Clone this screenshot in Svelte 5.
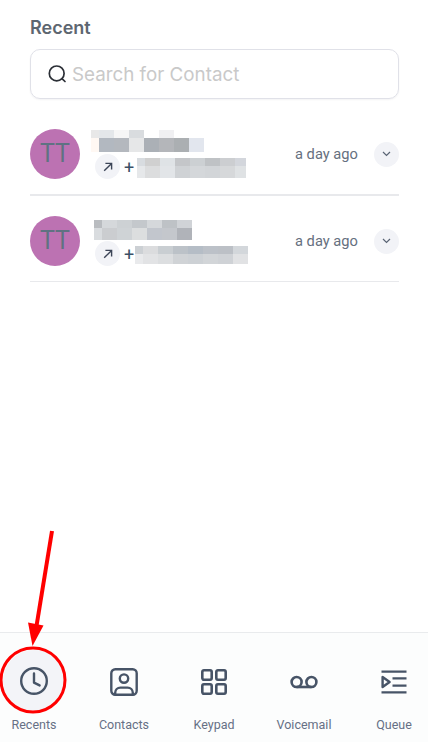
<script>
  // blurred-out name and number blocks, each cell is [width, colour]
  const calls = [
    {
      nameLeft: 0,
      nameTop: 1,
      numberTop: 2,
      digitsLeft: 0,
      nameHeights: [8, 14],
      numberHeights: [8, 12],
      name: [
        [[8, '#e8e8e8'], [15, '#e4e7ea'], [15, '#f6f6f6'], [15, '#d9dcdf'], [15, '#ffffff'], [15, '#f0f0f2']],
        [[8, '#fff8f3'], [15, '#b2b8c0'], [15, '#b4b8be'], [15, '#e6e7e8'], [15, '#abb0b6'], [15, '#b4b6ba'], [15, '#abafb2'], [15, '#e2e6ee']]
      ],
      number: [
        [[8, '#d8dce0'], [15, '#d0d0d0'], [15, '#dfe3e6'], [15, '#c4c6c9'], [15, '#ccd0d3'], [15, '#bfc2c5'], [15, '#ccced1'], [11, '#d3d6dc']],
        [[8, '#e6e8ea'], [15, '#dcddde'], [15, '#e2e5e8'], [15, '#cfd2d5'], [15, '#d4d7da'], [15, '#d2d5d8'], [15, '#d6d8da'], [11, '#dfe2e4']]
      ]
    },
    {
      nameLeft: 3,
      nameTop: 4,
      numberTop: 1,
      digitsLeft: -2,
      nameHeights: [8, 12],
      numberHeights: [8, 10],
      name: [
        [[8, '#b9bcc0'], [15, '#d5d8db'], [15, '#cdd1d4'], [15, '#c4c8cc'], [15, '#d5d8db'], [15, '#bec2c6'], [15, '#d0d3d7']],
        [[8, '#d9dcdf'], [15, '#cbcdd0'], [15, '#cfd3d6'], [15, '#dcdedf'], [15, '#c2c6cd'], [15, '#c4c7cc'], [15, '#b0b3b9']]
      ],
      number: [
        [[8, '#ccd0d4'], [15, '#dbdcde'], [15, '#c9ced2'], [15, '#bcc2c8'], [15, '#b5bdc6'], [15, '#bcc1c8'], [15, '#bcc0c6'], [15, '#d3d7db']],
        [[8, '#e9eaec'], [15, '#e2e3e5'], [15, '#dcdee0'], [15, '#d0d3d6'], [15, '#cdd1d5'], [15, '#d2d5d8'], [15, '#cfd2d6'], [15, '#e1e2e4']]
      ]
    }
  ];

  const tabs = ['Recents', 'Contacts', 'Keypad', 'Voicemail', 'Queue'];
</script>

{#snippet mosaic(rows, heights)}
  <div class="mosaic">
    {#each rows as cells, r}
      <div class="mosaic-row">
        {#each cells as [w, c]}
          <span style="width:{w}px;height:{heights[r]}px;background:{c}"></span>
        {/each}
      </div>
    {/each}
  </div>
{/snippet}

<div class="page">
  <main>
    <h1>Recent</h1>
    <div class="search">
      <svg width="20" height="20" viewBox="0 0 20 20" fill="none" stroke="#2b2f36" stroke-width="1.7" stroke-linecap="round">
        <circle cx="8.7" cy="9.4" r="7.4" />
        <path d="M14.2 14.8l2.8 2.7" />
      </svg>
      <span>Search for Contact</span>
    </div>

    <ul>
      {#each calls as call}
        <li>
          <div class="avatar">TT</div>
          <div class="info">
            <div class="name" style="margin:{call.nameTop}px 0 {call.numberTop}px {call.nameLeft}px">
              {@render mosaic(call.name, call.nameHeights)}
            </div>
            <div class="number">
              <div class="direction">
                <svg width="12" height="12" viewBox="0 0 12 12" fill="none" stroke="#3c4557" stroke-width="1.4">
                  <path d="M2.2 9.8L9.6 2.4M3.4 2.4h6.2v6.2" />
                </svg>
              </div>
              <span class="plus">+</span>
              <div class="digits" style="margin-left:{call.digitsLeft}px">
                {@render mosaic(call.number, call.numberHeights)}
              </div>
            </div>
          </div>
          <div class="meta">
            <span class="time">a day ago</span>
            <div class="toggle">
              <svg width="9" height="6" viewBox="0 0 9 6" fill="none" stroke="#5a6474" stroke-width="1.2">
                <path d="M1 1l3.500 3.500L8 1" />
              </svg>
            </div>
          </div>
        </li>
      {/each}
    </ul>
  </main>

  <nav>
    {#each tabs as tab, i}
      <div class="tab" class:active={i === 0}>
        <div class="tab-icon">
          {#if i === 0}
            <svg width="28" height="28" viewBox="0 0 28 28" fill="none" stroke="#475467" stroke-width="2.4" stroke-linecap="round" stroke-linejoin="round">
              <circle cx="14" cy="14" r="12.8" />
              <path d="M14 6.4V15.6l5.600 2.800" />
            </svg>
          {:else if i === 1}
            <svg class="low" width="28" height="28" viewBox="0 0 28 28" fill="none" stroke="#475467" stroke-width="2.4" stroke-linecap="round" stroke-linejoin="round">
              <rect x="1.3" y="1.3" width="25.4" height="25.4" rx="4" />
              <circle cx="14" cy="10.6" r="4.2" />
              <path d="M5.2 26.4v-1.6c0-3 2.4-5.2 5.2-5.2h7.2c2.8 0 5.2 2.2 5.2 5.2v1.6" />
            </svg>
          {:else if i === 2}
            <svg class="low" width="26" height="26" viewBox="0 0 26 26" fill="none" stroke="#475467" stroke-width="2.6" stroke-linejoin="round">
              <rect x="1.3" y="1.3" width="9.4" height="9.4" rx="1.6" />
              <rect x="15.3" y="1.3" width="9.4" height="9.4" rx="1.6" />
              <rect x="1.3" y="15.3" width="9.4" height="9.4" rx="1.6" />
              <rect x="15.3" y="15.3" width="9.4" height="9.4" rx="1.6" />
            </svg>
          {:else if i === 3}
            <svg class="low" width="28" height="14" viewBox="0 0 28 14" fill="none" stroke="#475467" stroke-width="2.6">
              <circle cx="6.6" cy="7" r="5" />
              <circle cx="21.4" cy="7" r="5" />
              <path d="M6.6 12h14.8" />
            </svg>
          {:else}
            <svg class="low" width="26" height="24" viewBox="0 0 26 24" fill="none" stroke="#475467" stroke-width="2.4">
              <path d="M0.5 1.6h25M0.5 22.4h25M11.5 8.400h14M11.5 15.600h14" />
              <path d="M1.6 7v10l7-5z" stroke-linejoin="round" />
            </svg>
          {/if}
        </div>
        <span>{tab}</span>
      </div>
    {/each}
  </nav>

  <!-- red annotation drawn over the screenshot -->
  <svg class="annotation" width="428" height="742" viewBox="0 0 428 742" fill="none">
    <path d="M52 531L36.500 626" stroke="#ff0000" stroke-width="4" />
    <path d="M28 622.500L43.500 625.500L32.500 646z" fill="#ff0000" />
    <circle cx="33" cy="680" r="32" stroke="#ff0000" stroke-width="3" />
  </svg>
</div>

<style>
  :global(body) {
    background: #fff;
  }
  .page {
    position: relative;
    width: 428px;
    height: 742px;
    overflow: hidden;
    display: flex;
    flex-direction: column;
    font-family: Roboto, sans-serif;
  }
  main {
    flex: 1;
    padding: 16px 29px 0 30px;
  }
  h1 {
    margin: 0 0 10px;
    font: 600 18px/23px Inter, sans-serif;
    color: #5d6670;
  }
  .search {
    display: flex;
    align-items: center;
    gap: 4px;
    height: 50px;
    box-sizing: border-box;
    padding-left: 17px;
    border: 1px solid #e0e1e8;
    border-radius: 10px;
    box-shadow: 0 1px 2px rgba(16, 24, 40, 0.05);
    font: 400 18.800px Inter, sans-serif;
    color: #c9c9c9;
  }
  ul {
    list-style: none;
    margin: 0;
    padding: 0;
  }
  li {
    display: flex;
    align-items: flex-start;
    height: 86px;
    box-sizing: border-box;
    padding-top: 20px;
    border-bottom: 1px solid #e8e9ec;
  }
  li:first-child {
    height: 97px;
    padding-top: 30px;
    border-bottom-width: 2px;
  }
  .avatar {
    width: 50px;
    height: 50px;
    flex: none;
    border-radius: 50%;
    background: #bc72b2;
    color: #5f7282;
    font: 400 25px/50px Roboto, sans-serif;
    text-align: center;
  }
  .info {
    flex: 1;
    margin-left: 11px;
  }
  .mosaic-row {
    display: flex;
  }
  .mosaic-row span {
    display: block;
  }
  .number {
    display: flex;
    align-items: center;
    margin-left: 4px;
  }
  .direction {
    width: 25px;
    height: 25px;
    border-radius: 50%;
    background: #f2f3f7;
    display: flex;
    align-items: center;
    justify-content: center;
  }
  .plus {
    width: 17px;
    padding: 1px 0 0 4px;
    box-sizing: border-box;
    font-size: 18px;
    color: #3b4f66;
  }
  .digits {
    margin-top: 3px;
  }
  .meta {
    height: 50px;
    display: flex;
    align-items: center;
  }
  .time {
    margin-right: 16px;
    font-size: 14.700px;
    color: #667080;
  }
  .toggle {
    width: 25px;
    height: 25px;
    border-radius: 50%;
    background: #f2f3f7;
    display: flex;
    align-items: center;
    justify-content: center;
  }
  nav {
    flex: none;
    height: 110px;
    box-sizing: border-box;
    border-top: 1px solid #e9ebed;
    background: #fcfdfd;
    display: grid;
    grid-template-columns: repeat(5, 90px);
    justify-content: center;
  }
  .tab {
    display: flex;
    flex-direction: column;
    align-items: center;
    font-size: 12.500px;
    color: #667085;
  }
  .tab-icon {
    width: 62px;
    height: 62px;
    margin: 17px 0 5px;
    border-radius: 50%;
    display: flex;
    align-items: center;
    justify-content: center;
  }
  .tab-icon .low {
    margin-top: 2px;
  }
  .tab.active .tab-icon {
    background: #f3f4f8;
  }
  .annotation {
    position: absolute;
    left: 0;
    top: 0;
    pointer-events: none;
  }
</style>
